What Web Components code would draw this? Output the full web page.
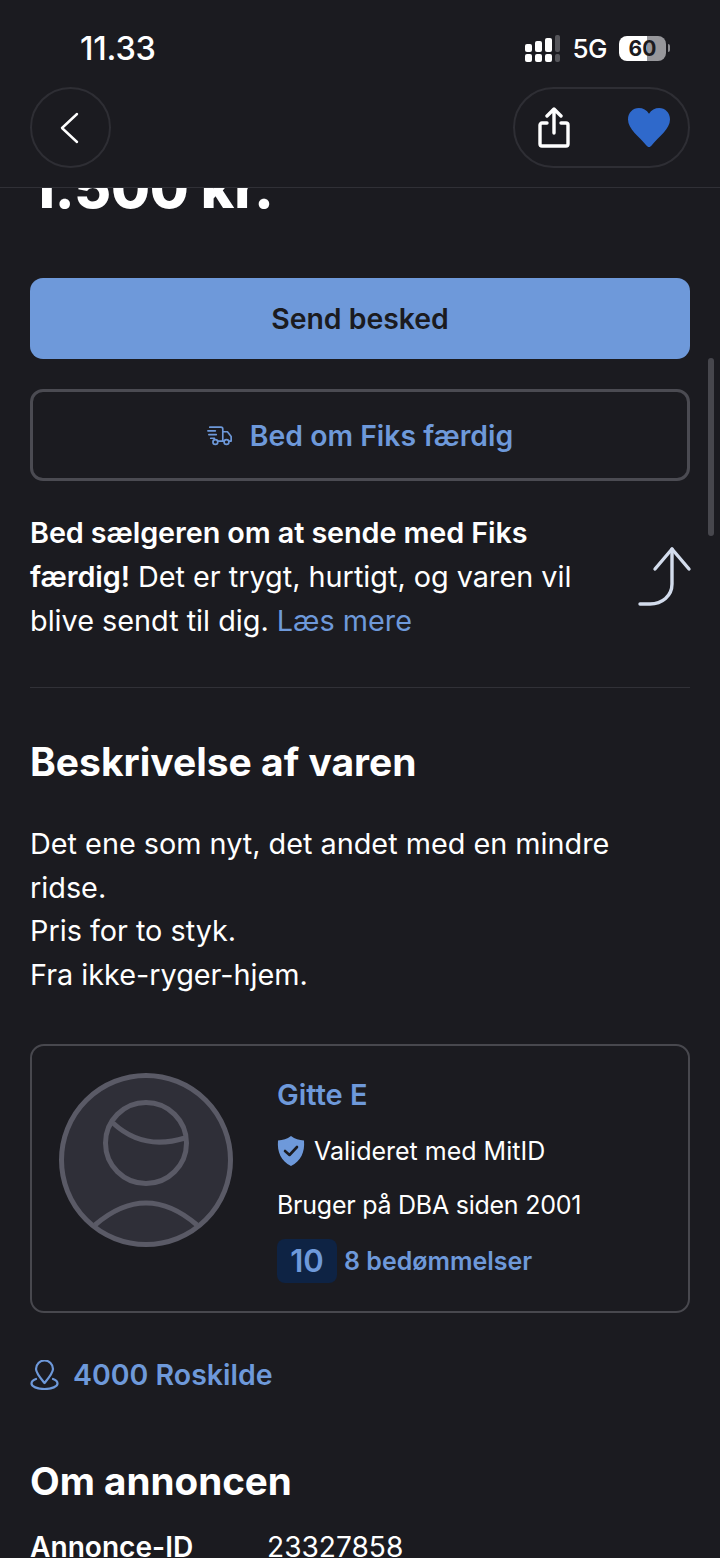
<!DOCTYPE html>
<html lang="da">
<head>
<meta charset="utf-8">
<title>Annonce</title>
<style>
    html, body { margin: 0; height: 100%; background: #1b1b20; }
    body { font-family: Inter, "Liberation Sans", sans-serif; color: #fff; overflow: hidden; }
    app-screen { height: 1558px; }
</style>
</head>
<body>
<app-screen>
    <top-bar slot="top"></top-bar>
    <price-tag>1.500 kr.</price-tag>
    <action-button kind="primary">Send besked</action-button>
    <action-button kind="outline" icon="truck">Bed om Fiks færdig</action-button>
    <fiks-hint></fiks-hint>
    <text-section title="Beskrivelse af varen">Det ene som nyt, det andet med en mindre ridse.<br>Pris for to styk.<br>Fra ikke-ryger-hjem.</text-section>
    <seller-card name="Gitte E" score="10" reviews="8 bedømmelser"></seller-card>
    <location-link>4000 Roskilde</location-link>
    <ad-info></ad-info>
</app-screen>

<script>
class AppScreen extends HTMLElement {
    connectedCallback() {
        this.attachShadow({ mode: 'open' });
        this.shadowRoot.innerHTML = `
            <style>
                :host { display: flex; flex-direction: column; position: relative; overflow: hidden; background: #1b1b20; }
                .content { flex: 1; min-height: 0; overflow: hidden; padding: 0 30px; }
                .scrollbar {
                    position: absolute; left: 708px; top: 358px;
                    width: 6px; height: 178px; border-radius: 3px; background: #47474d;
                }
            </style>
            <slot name="top"></slot>
            <div class="content"><slot></slot></div>
            <div class="scrollbar"></div>
        `;
    }
}

class TopBar extends HTMLElement {
    connectedCallback() {
        this.attachShadow({ mode: 'open' });
        this.shadowRoot.innerHTML = `
            <style>
                :host { display: block; position: relative; z-index: 2; height: 187px; background: #1b1b20; border-bottom: 1px solid #303036; }
                .status { display: flex; justify-content: space-between; align-items: center; height: 36px; padding: 30px 50px 0 80px; }
                .time { font-size: 32.500px; font-weight: 500; letter-spacing: -0.2px; }
                .right { display: flex; align-items: center; }
                .net { font-size: 26px; font-weight: 500; margin: 0 12px 0 12px; letter-spacing: -0.5px; }
                .battery { position: relative; width: 47px; height: 25px; border-radius: 8px; overflow: hidden;
                    background: linear-gradient(90deg, #fff 0 60%, #97979b 60% 100%);
                    color: #1b1b20; font-size: 21px; font-weight: 700; line-height: 25px; text-align: center; }
                .nub { width: 2px; height: 8px; margin-left: 2px; background: #8c8c90; border-radius: 0 2px 2px 0; }
                .nav { display: flex; justify-content: space-between; padding: 21px 30px 0; }
                .round { box-sizing: border-box; height: 81px; border: 2px solid #2e2e34; border-radius: 41px; display: flex; align-items: center; }
                .back { width: 81px; padding-left: 27px; }
                .actions { width: 177px; justify-content: space-between; padding: 0 18px 0 23px; }
            </style>
            <div class="status">
                <span class="time">11.33</span>
                <div class="right">
                    <svg width="35" height="27" viewBox="0 0 35 27" fill="#fff">
                        <rect x="0" y="9" width="7" height="8" rx="2"/><rect x="0" y="19" width="7" height="8" rx="2"/>
                        <rect x="10" y="6" width="7" height="11" rx="2"/><rect x="10" y="19" width="7" height="8" rx="2"/>
                        <rect x="20" y="3" width="7" height="14" rx="2"/><rect x="20" y="19" width="7" height="8" rx="2"/>
                        <rect x="30" y="0" width="5" height="17" rx="2" fill="#55555a"/><rect x="30" y="19" width="5" height="8" rx="2" fill="#55555a"/>
                    </svg>
                    <span class="net">5G</span>
                    <div class="battery">60</div>
                    <div class="nub"></div>
                </div>
            </div>
            <div class="nav">
                <div class="round back">
                    <svg width="20" height="32" viewBox="0 0 20 32" fill="none" stroke="#fff" stroke-width="2.400" stroke-linecap="round" stroke-linejoin="round"><path d="M18 2 3 16l15 14"/></svg>
                </div>
                <div class="round actions">
                    <svg width="32" height="41" viewBox="0 0 32 41" fill="none" stroke="#fff" stroke-width="3.400" stroke-linecap="round" stroke-linejoin="round">
                        <path d="M16 26V3M9 9l7-7 7 7"/>
                        <path d="M9 16H4a2 2 0 0 0-2 2v19a2 2 0 0 0 2 2h24a2 2 0 0 0 2-2V18a2 2 0 0 0-2-2h-5"/>
                    </svg>
                    <svg width="42" height="39" viewBox="0 0 42 39"><path fill="#2f69cb" d="M21 39c-1 0-1.800-.6-2.800-1.800C11 28.500 0 21 0 11.500 0 4.600 5 0 10.800 0 15 0 18.800 2 21 5.800 23.200 2 27 0 31.200 0 37 0 42 4.600 42 11.500 42 21 31 28.500 23.800 37.200 22.800 38.400 22 39 21 39Z"/></svg>
                </div>
            </div>
        `;
    }
}

class PriceTag extends HTMLElement {
    connectedCallback() {
        this.attachShadow({ mode: 'open' });
        this.shadowRoot.innerHTML = `
            <style>
                :host { display: block; height: 124px; margin-top: -34px; font-size: 56.500px; font-weight: 800; line-height: 68px; letter-spacing: -0.2px; }
            </style>
            <slot></slot>
        `;
    }
}

class ActionButton extends HTMLElement {
    connectedCallback() {
        const outline = this.getAttribute('kind') === 'outline';
        const truck = `
            <svg width="26" height="21" viewBox="0 0 28 22" fill="none" stroke="#6e99da" stroke-width="1.800" stroke-linecap="round" stroke-linejoin="round">
                <path d="M3 2h12a2 2 0 0 1 2 2v13h-5M1 6h8M2 10h8M4 14h4"/>
                <path d="M17 7h5l4 5v5h-2M17 17h1"/>
                <circle cx="9" cy="18" r="2.600"/><circle cx="21" cy="18" r="2.600"/>
            </svg>`;
        this.attachShadow({ mode: 'open' });
        this.shadowRoot.innerHTML = `
            <style>
                :host { display: block; margin-bottom: 30px; }
                .btn { box-sizing: border-box; display: flex; align-items: center; justify-content: center; gap: 17px; font-weight: 600; font-size: 28.400px; border-radius: 13px; }
                .primary { height: 81px; background: #6e99da; color: #1b1b20; }
                .outline { height: 92px; border: 3px solid #4b4b52; color: #6e99da; }
            </style>
            <div class="btn ${outline ? 'outline' : 'primary'}">${outline ? truck : ''}<slot></slot></div>
        `;
    }
}

class FiksHint extends HTMLElement {
    connectedCallback() {
        this.attachShadow({ mode: 'open' });
        this.shadowRoot.innerHTML = `
            <style>
                :host { display: flex; justify-content: space-between; align-items: flex-start; padding-bottom: 44px; border-bottom: 1px solid #313137; font-size: 28.800px; line-height: 44px; }
                p { margin: 0; width: 570px; }
                span { display: block; white-space: nowrap; }
                b { font-weight: 600; letter-spacing: -0.1px; }
                a { color: #6e99da; text-decoration: none; }
                svg { margin-top: 35px; overflow: visible; }
            </style>
            <p>
                <span><b>Bed sælgeren om at sende med Fiks</b></span>
                <span><b>færdig!</b> Det er trygt, hurtigt, og varen vil</span>
                <span>blive sendt til dig. <a href="#">Læs mere</a></span>
            </p>
            <svg width="52" height="60" viewBox="0 0 52 60" fill="none" stroke="#d3dcec" stroke-width="3.400" stroke-linecap="round" stroke-linejoin="round">
                <path d="M2 58h10c12 0 22-8 22-20V3"/>
                <path d="M17 23 34 3l17 20"/>
            </svg>
        `;
    }
}

class TextSection extends HTMLElement {
    connectedCallback() {
        this.attachShadow({ mode: 'open' });
        this.shadowRoot.innerHTML = `
            <style>
                :host { display: block; margin-top: 46px; }
                h2 { margin: 0 0 32px; font-size: 39px; line-height: 56px; font-weight: 700; }
                .body { font-size: 28.800px; line-height: 43.700px; }
            </style>
            <h2>${this.getAttribute('title')}</h2>
            <div class="body"><slot></slot></div>
        `;
    }
}

class SellerCard extends HTMLElement {
    connectedCallback() {
        this.attachShadow({ mode: 'open' });
        this.shadowRoot.innerHTML = `
            <style>
                :host { display: grid; grid-template-columns: 174px 1fr; column-gap: 44px; box-sizing: border-box; height: 269px; margin-top: 47px; padding: 27px; border: 2px solid #48484e; border-radius: 14px; }
                .info { display: flex; flex-direction: column; font-size: 25px; }
                .name { color: #6e99da; font-size: 29px; font-weight: 600; line-height: 36px; margin-top: 4px; }
                .row { display: flex; align-items: center; gap: 9px; height: 36px; margin-top: 20px; }
                .row.since { margin-top: 18px; letter-spacing: -0.25px; }
                .score { width: 60px; height: 44px; border-radius: 8px; background: #0e2344; color: #6e99da; font-size: 31px; font-weight: 600; display: flex; align-items: center; justify-content: center; }
                .reviews { color: #6e99da; font-weight: 600; margin-left: -2px; }
            </style>
            <svg width="174" height="174" viewBox="0 0 174 174" fill="none" stroke="#5a5a66" stroke-width="5">
                <circle cx="87" cy="87" r="84.500" fill="#2f2f38"/>
                <circle cx="87" cy="70" r="40.500"/>
                <path d="M54 50Q84 78 126 65"/>
                <path d="M36 152Q87 108 138 152"/>
            </svg>
            <div class="info">
                <div class="name">${this.getAttribute('name')}</div>
                <div class="row">
                    <svg width="28" height="30" viewBox="0 0 28 30"><path fill="#6e99da" d="M14 0c4 3 8 4 13 4.500C28 16 24 25 14 30 4 25 0 16 1 4.500 6 4 10 3 14 0Z"/><path d="M8 15l4.500 4L20 11" fill="none" stroke="#1b1b20" stroke-width="2.600" stroke-linecap="round" stroke-linejoin="round"/></svg>
                    <span>Valideret med MitID</span>
                </div>
                <div class="row since">Bruger på DBA siden 2001</div>
                <div class="row">
                    <span class="score">${this.getAttribute('score')}</span>
                    <span class="reviews">${this.getAttribute('reviews')}</span>
                </div>
            </div>
        `;
    }
}

class LocationLink extends HTMLElement {
    connectedCallback() {
        this.attachShadow({ mode: 'open' });
        this.shadowRoot.innerHTML = `
            <style>
                :host { display: flex; align-items: center; gap: 14px; margin-top: 44px; color: #6e99da; font-size: 28.500px; font-weight: 600; line-height: 36px; }
            </style>
            <svg width="29" height="30" viewBox="0 0 29 30" fill="none" stroke="#6e99da" stroke-width="2.200" stroke-linecap="round" stroke-linejoin="round">
                <path d="M14.500 23C9.500 17 6 13 6 9a8.500 8.500 0 0 1 17 0c0 4-3.500 8-8.500 14Z"/>
                <path d="M6 19c-3 1-4.500 2.500-4.500 4.500 0 3 5.500 5.500 13 5.500s13-2.500 13-5.500c0-2-1.500-3.500-4.500-4.500"/>
            </svg>
            <slot></slot>
        `;
    }
}

class AdInfo extends HTMLElement {
    connectedCallback() {
        this.attachShadow({ mode: 'open' });
        this.shadowRoot.innerHTML = `
            <style>
                :host { display: block; margin-top: 60px; }
                h2 { margin: 0 0 16px; font-size: 38.600px; line-height: 56px; font-weight: 700; }
                .row { display: grid; grid-template-columns: 237px 1fr; font-size: 28.100px; line-height: 44px; }
                b { font-weight: 600; }
            </style>
            <h2>Om annoncen</h2>
            <div class="row"><b>Annonce-ID</b><span>23327858</span></div>
        `;
    }
}

customElements.define('app-screen', AppScreen);
customElements.define('top-bar', TopBar);
customElements.define('price-tag', PriceTag);
customElements.define('action-button', ActionButton);
customElements.define('fiks-hint', FiksHint);
customElements.define('text-section', TextSection);
customElements.define('seller-card', SellerCard);
customElements.define('location-link', LocationLink);
customElements.define('ad-info', AdInfo);
</script>
</body>
</html>
